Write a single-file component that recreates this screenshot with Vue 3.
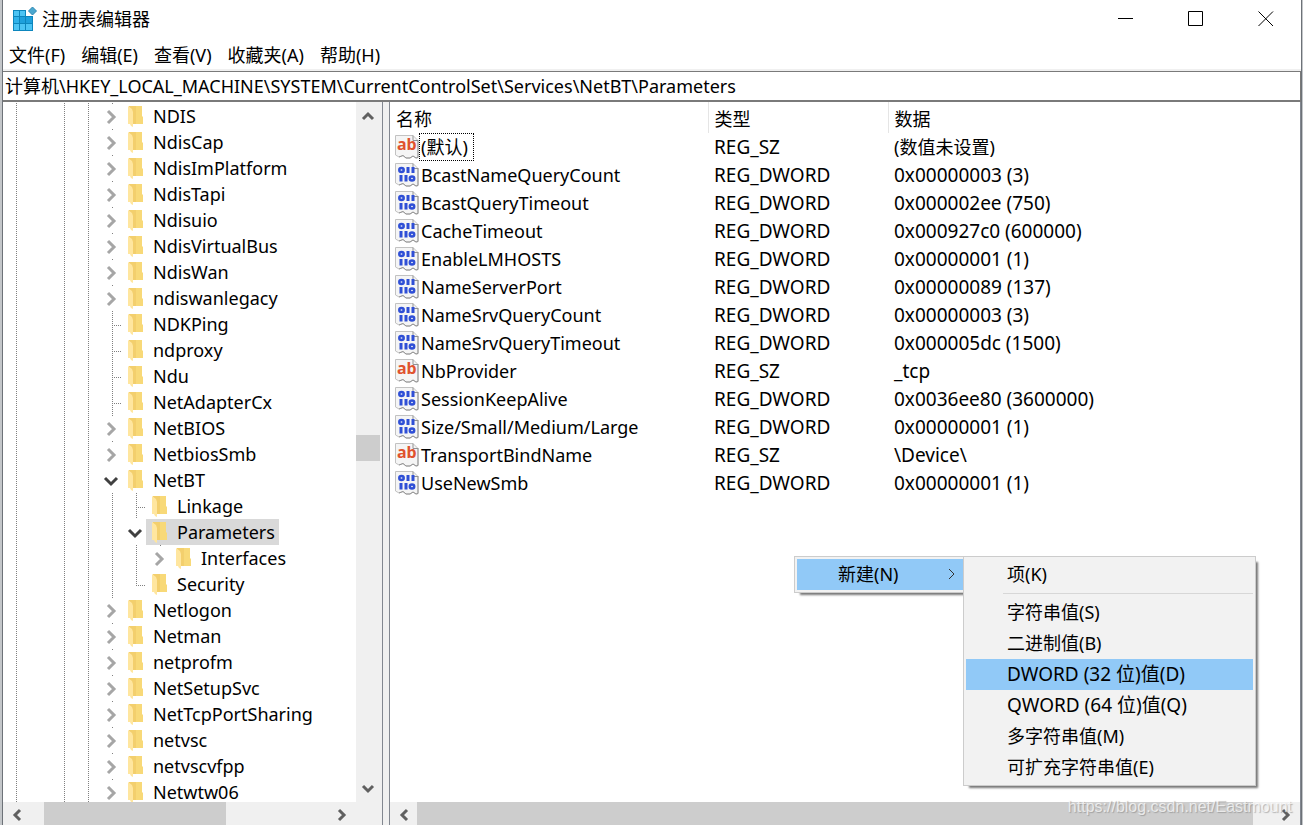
<script setup>
import { ref } from 'vue'

const menus = ['文件(F)', '编辑(E)', '查看(V)', '收藏夹(A)', '帮助(H)']
const address = ref('计算机\\HKEY_LOCAL_MACHINE\\SYSTEM\\CurrentControlSet\\Services\\NetBT\\Parameters')

// Guide columns: v = vertical line, n = none.
// Last column: c = collapsed, o = expanded, l = leaf, e = last leaf.
const node = (label, kind = 'c', guides = 'vnvv') => ({ label, kind, guides: guides.split('') })
const tree = [
  node('NDIS'),
  node('NdisCap'),
  node('NdisImPlatform'),
  node('NdisTapi'),
  node('Ndisuio'),
  node('NdisVirtualBus'),
  node('NdisWan'),
  node('ndiswanlegacy'),
  node('NDKPing', 'l'),
  node('ndproxy', 'l'),
  node('Ndu', 'l'),
  node('NetAdapterCx', 'l'),
  node('NetBIOS'),
  node('NetbiosSmb'),
  node('NetBT', 'o'),
  node('Linkage', 'l', 'vnvvv'),
  node('Parameters', 'o', 'vnvvv'),
  node('Interfaces', 'c', 'vnvvvv'),
  node('Security', 'e', 'vnvvv'),
  node('Netlogon'),
  node('Netman'),
  node('netprofm'),
  node('NetSetupSvc'),
  node('NetTcpPortSharing'),
  node('netvsc'),
  node('netvscvfpp'),
  node('Netwtw06'),
]
const selected = ref('Parameters')

const values = [
  ['(默认)', 'REG_SZ', '(数值未设置)'],
  ['BcastNameQueryCount', 'REG_DWORD', '0x00000003 (3)'],
  ['BcastQueryTimeout', 'REG_DWORD', '0x000002ee (750)'],
  ['CacheTimeout', 'REG_DWORD', '0x000927c0 (600000)'],
  ['EnableLMHOSTS', 'REG_DWORD', '0x00000001 (1)'],
  ['NameServerPort', 'REG_DWORD', '0x00000089 (137)'],
  ['NameSrvQueryCount', 'REG_DWORD', '0x00000003 (3)'],
  ['NameSrvQueryTimeout', 'REG_DWORD', '0x000005dc (1500)'],
  ['NbProvider', 'REG_SZ', '_tcp'],
  ['SessionKeepAlive', 'REG_DWORD', '0x0036ee80 (3600000)'],
  ['Size/Small/Medium/Large', 'REG_DWORD', '0x00000001 (1)'],
  ['TransportBindName', 'REG_SZ', '\\Device\\'],
  ['UseNewSmb', 'REG_DWORD', '0x00000001 (1)'],
]

const newItems = ['字符串值(S)', '二进制值(B)', 'DWORD (32 位)值(D)', 'QWORD (64 位)值(Q)', '多字符串值(M)', '可扩充字符串值(E)']
</script>

<template>
  <div class="desktop">
    <main class="window">
      <header class="titlebar">
        <svg class="app-icon" width="24" height="26" viewBox="0 0 24 26" aria-hidden="true">
          <rect x="0" y="4" width="20" height="21" fill="#0d86bd" />
          <g fill="#4cc4f4">
            <rect x="1" y="5" width="5" height="5" /><rect x="7" y="5" width="5" height="5" />
            <rect x="1" y="11" width="5" height="6" fill="#2fb2ea" />
            <rect x="1" y="18" width="5" height="6" /><rect x="7" y="18" width="5" height="6" /><rect x="13" y="18" width="6" height="6" />
          </g>
          <rect x="7" y="11" width="5" height="6" fill="#1ea0dc" />
          <rect x="13" y="11" width="6" height="6" fill="#1ea0dc" />
          <path d="M13 3h8v7h-8z" fill="#fff" />
          <path d="M19.500 1l4 4-4 4-4-4z" fill="#4ba7cf" stroke="#2b87b2" />
        </svg>
        <h1>注册表编辑器</h1>
        <div class="controls">
          <button type="button" aria-label="最小化"><svg width="16" height="16"><path d="M0 7.500h15" /></svg></button>
          <button type="button" aria-label="最大化"><svg width="16" height="16"><path d="M.5.500h14v14h-14z" /></svg></button>
          <button type="button" aria-label="关闭"><svg width="16" height="16"><path d="M.5.500l14.500 14.500M15 .500L.5 15" /></svg></button>
        </div>
      </header>
      <nav class="menubar">
        <button v-for="m in menus" :key="m" type="button">{{ m }}</button>
      </nav>
      <input v-model="address" class="address" type="text" aria-label="地址" />

      <div class="panes">
        <section class="tree-pane">
          <div class="tree-main">
            <ul class="tree">
              <li v-for="n in tree" :key="n.label">
                <span v-for="(g, i) in n.guides" :key="i" class="guide" :class="{ line: g === 'v' }"></span>
                <button v-if="n.kind === 'c' || n.kind === 'o'" type="button" class="toggle" :class="{ collapsed: n.kind === 'c' }" :aria-label="(n.kind === 'c' ? '展开 ' : '折叠 ') + n.label">
                  <svg v-if="n.kind === 'c'" width="16" height="16"><path d="M5 2l6 6-6 6" stroke="#a6a6a6" /></svg>
                  <svg v-else width="16" height="16"><path d="M2 5l6 6 6-6" stroke="#404040" /></svg>
                </button>
                <span v-else class="toggle leaf" :class="{ last: n.kind === 'e' }"></span>
                <button type="button" class="key" :class="{ selected: selected === n.label }" @click="selected = n.label">
                  <svg width="15" height="22" viewBox="0 0 15 22" aria-hidden="true">
                    <path d="M1 1h13v10l1 1v7H1z" fill="#f8d978" />
                    <path d="M1 1h7v18H4z" fill="#f3cf6d" />
                    <path d="M0 1l4 3 1 3v15l-2-1-1-2H0z" fill="#ffe69f" />
                  </svg>
                  {{ n.label }}
                </button>
              </li>
            </ul>
            <div class="vscroll">
              <button type="button" aria-label="向上滚动"><svg width="16" height="16"><path d="M3 11l5-5 5 5" /></svg></button>
              <span class="track-before"></span>
              <span class="thumb"></span>
              <span class="track-after"></span>
              <button type="button" aria-label="向下滚动"><svg width="16" height="16"><path d="M3 6l5 5 5-5" /></svg></button>
            </div>
          </div>
          <div class="hscroll">
            <button type="button" aria-label="向左滚动"><svg width="16" height="16"><path d="M11 4L6 9l5 5" /></svg></button>
            <span class="thumb tree-thumb"></span>
            <button type="button" class="far" aria-label="向右滚动"><svg width="16" height="16"><path d="M5 4l5 5-5 5" /></svg></button>
            <span class="corner"></span>
          </div>
        </section>

        <section class="list-pane">
          <div class="list-main">
            <table>
              <colgroup><col class="c-name" /><col class="c-type" /><col /></colgroup>
              <thead>
                <tr><th scope="col">名称</th><th scope="col">类型</th><th scope="col">数据</th></tr>
              </thead>
              <tbody>
                <tr v-for="(v, i) in values" :key="v[0]">
                  <td>
                    <div class="name">
                      <svg width="24" height="24" viewBox="0 0 24 24" aria-hidden="true">
                        <path d="M.5.500H18l5 5V22.500l-2 .5-3-2-3 2H11l-3-2.500-4 1.500L.5 20z" fill="#f5f5f5" stroke="#c2c2c2" />
                        <path d="M18 .500V5.500h5M23 5v17.500l-2 .5-3-2-3 2H11l-3-2.500-4 1.500" fill="none" stroke="#929292" />
                        <text v-if="v[1] === 'REG_SZ'" x="2" y="15" class="ab">ab</text>
                        <g v-else stroke="#2f4fd6" stroke-width="3" fill="none">
                          <ellipse cx="6.500" cy="7" rx="2.200" ry="2" stroke-width="2.500" />
                          <path d="M13 4v6M18 4v6M6 12v6.500M11 12v6.500" />
                          <ellipse cx="17" cy="15.500" rx="2.200" ry="2" stroke-width="2.500" />
                        </g>
                      </svg>
                      <span :class="{ focused: i === 0 }">{{ v[0] }}</span>
                    </div>
                  </td>
                  <td class="latin">{{ v[1] }}</td>
                  <td :class="{ latin: i > 0 }">{{ v[2] }}</td>
                </tr>
              </tbody>
            </table>
          </div>
          <div class="hscroll">
            <button type="button" aria-label="向左滚动"><svg width="16" height="16"><path d="M11 4L6 9l5 5" /></svg></button>
            <span class="thumb list-thumb"></span>
            <button type="button" class="wide" aria-label="向右滚动"><svg width="16" height="16"><path d="M5 4l5 5-5 5" /></svg></button>
          </div>

          <div class="popup context">
            <button type="button" class="active">新建(N)
              <svg width="8" height="12"><path d="M1 1l5 5-5 5" fill="none" stroke="#333" /></svg>
            </button>
          </div>
          <div class="popup submenu">
            <button type="button">项(K)</button>
            <hr />
            <button v-for="(t, i) in newItems" :key="t" type="button" :class="{ active: i === 2, latin: t.includes('WORD') }">{{ t }}</button>
          </div>
          <span class="watermark">https://blog.csdn.net/Eastmount</span>
        </section>
      </div>
    </main>
  </div>
</template>

<style>
body {
  margin: 0;
  overflow: hidden;
}
</style>

<style scoped>
* {
  box-sizing: border-box;
}
.desktop {
  height: 100vh;
  padding: 0 1px 0 2px;
  background: #c3c6c9;
  font: 18px/26px "Noto Sans", "Noto Sans CJK SC", sans-serif;
  color: #000;
}
button {
  border: 0;
  padding: 0;
  margin: 0;
  background: none;
  font: inherit;
  color: inherit;
  text-align: left;
  white-space: nowrap;
}
.window {
  height: 100%;
  display: flex;
  flex-direction: column;
  background: #fff;
  border: solid #6d7278;
  border-width: 0 1px;
}
.titlebar {
  display: flex;
  align-items: center;
  height: 37px;
  flex: none;
  padding-left: 10px;
}
.titlebar h1 {
  margin: 0 0 0 5px;
  font-size: 18px;
  font-weight: 400;
}
.controls {
  display: flex;
  margin-left: auto;
}
.controls button {
  width: 70px;
  height: 37px;
  display: grid;
  place-items: center;
}
.controls path {
  fill: none;
  stroke: #000;
}
.menubar {
  display: flex;
  gap: 16px;
  height: 34px;
  flex: none;
  padding: 4px 6px 0;
  border-bottom: 2px solid #f0f0f0;
}
.address {
  height: 31px;
  flex: none;
  width: 100%;
  border: 1px solid #7a7a7a;
  border-width: 1px 1px 2px 0;
  padding: 0 2px 2px;
  outline: 0;
  background: #fff;
  font: inherit;
  color: inherit;
}
.panes {
  flex: 1;
  min-height: 0;
  display: flex;
  gap: 6px;
  background: #f0f0f0;
}
.tree-pane {
  width: 380px;
  flex: none;
  display: flex;
  flex-direction: column;
  background: #fff;
  border-right: 1px solid #828790;
}
.tree-main {
  flex: 1;
  min-height: 0;
  display: flex;
}
.tree {
  flex: 1;
  min-width: 0;
  margin: 0;
  padding: 1px 0 0 1px;
  list-style: none;
  overflow: hidden;
}
.tree li {
  display: flex;
  height: 26px;
}
.guide {
  width: 24px;
  flex: none;
}
.line,
.leaf,
.collapsed {
  background-image: repeating-linear-gradient(#808080 0 1px, transparent 1px 2px);
  background-repeat: no-repeat;
  background-position: 12px 0;
  background-size: 1px 100%;
}
.toggle {
  width: 18px;
  flex: none;
  margin-right: 4px;
}
.toggle svg {
  display: block;
  margin: 1px 0 0 3px;
}
.toggle path {
  fill: none;
  stroke-width: 3;
}
.collapsed {
  background-size: 1px 2px;
}
.leaf {
  width: 22px;
  margin: 0;
  background-image: repeating-linear-gradient(#808080 0 1px, transparent 1px 2px), repeating-linear-gradient(90deg, #808080 0 1px, transparent 1px 2px);
  background-position: 12px 0, 12px 14px;
  background-size: 1px 100%, 10px 1px;
}
.last {
  background-size: 1px 14px, 10px 1px;
}
.key {
  display: flex;
  align-items: center;
  gap: 10px;
  height: 26px;
  padding: 0 4px 0 6px;
  line-height: 20px;
}
.key svg {
  flex: none;
}
.selected {
  background: #d9d9d9;
}
.vscroll {
  width: 26px;
  flex: none;
  display: flex;
  flex-direction: column;
  padding-right: 2px;
  background: #f0f0f0;
}
.vscroll button {
  height: 28px;
  display: grid;
  place-items: center;
}
.thumb {
  background: #cdcdcd;
}
.vscroll .thumb {
  height: 26px;
}
.track-before {
  flex: 304;
}
.track-after {
  flex: 313;
}
.vscroll path,
.hscroll path {
  fill: none;
  stroke: #606060;
  stroke-width: 3;
}
.hscroll {
  height: 23px;
  flex: none;
  display: flex;
  background: #f0f0f0;
}
.hscroll button {
  width: 27px;
  display: grid;
  place-items: center;
}
.tree-thumb {
  width: 182px;
  margin-left: 14px;
}
.hscroll .far {
  margin-left: auto;
}
.corner {
  width: 27px;
}
.list-pane {
  position: relative;
  flex: 1;
  min-width: 0;
  display: flex;
  flex-direction: column;
  background: #fff;
  border: solid #828790;
  border-width: 0 1px;
}
.list-main {
  flex: 1;
  min-height: 0;
  overflow: hidden;
}
table {
  width: 100%;
  table-layout: fixed;
  border-collapse: collapse;
}
.c-name {
  width: 318px;
}
.c-type {
  width: 180px;
}
th,
td {
  padding: 0 0 0 6px;
  font-weight: 400;
  text-align: left;
  white-space: nowrap;
}
th {
  height: 31px;
  padding-top: 2px;
  border-right: 1px solid #e5e5e5;
}
th:last-child {
  border-right: 0;
}
td {
  height: 28px;
}
td:first-child {
  padding-left: 5px;
}
.latin {
  font-size: 19px;
}
.name {
  display: flex;
  align-items: center;
}
.name span {
  padding: 0 5px 0 1px;
  border: 1px solid transparent;
  line-height: 26px;
}
.name .focused {
  border: 1px dotted #000;
}
.ab {
  font: 700 16px "Noto Sans", sans-serif;
  fill: #e0532e;
}
.hscroll .list-thumb {
  flex: 1;
}
.hscroll .wide {
  width: 47px;
  padding-left: 18px;
}
.popup {
  position: absolute;
  padding: 2px;
  background: #f2f2f2;
  border: 1px solid #ccc;
  box-shadow: 4px 4px 2px -2px #777;
}
.popup button {
  display: flex;
  align-items: center;
  width: 100%;
  height: 31px;
  padding: 0 0 2px 41px;
}
.popup .active {
  background: #91c9f7;
}
.popup hr {
  margin: 3px 0 3px 37px;
  border: 0;
  border-top: 1px solid #d7d7d7;
}
.context {
  top: 454px;
  left: 404px;
  width: 172px;
}
.context svg {
  margin-left: 50px;
}
.submenu {
  top: 454px;
  left: 573px;
  width: 293px;
}
.watermark {
  position: absolute;
  right: 8px;
  bottom: 8px;
  font: 16px/20px "Liberation Sans", sans-serif;
  color: rgba(255, 255, 255, 0.7);
  text-shadow: 1px 1px 1px rgba(120, 120, 120, 0.5);
  pointer-events: none;
}
</style>
